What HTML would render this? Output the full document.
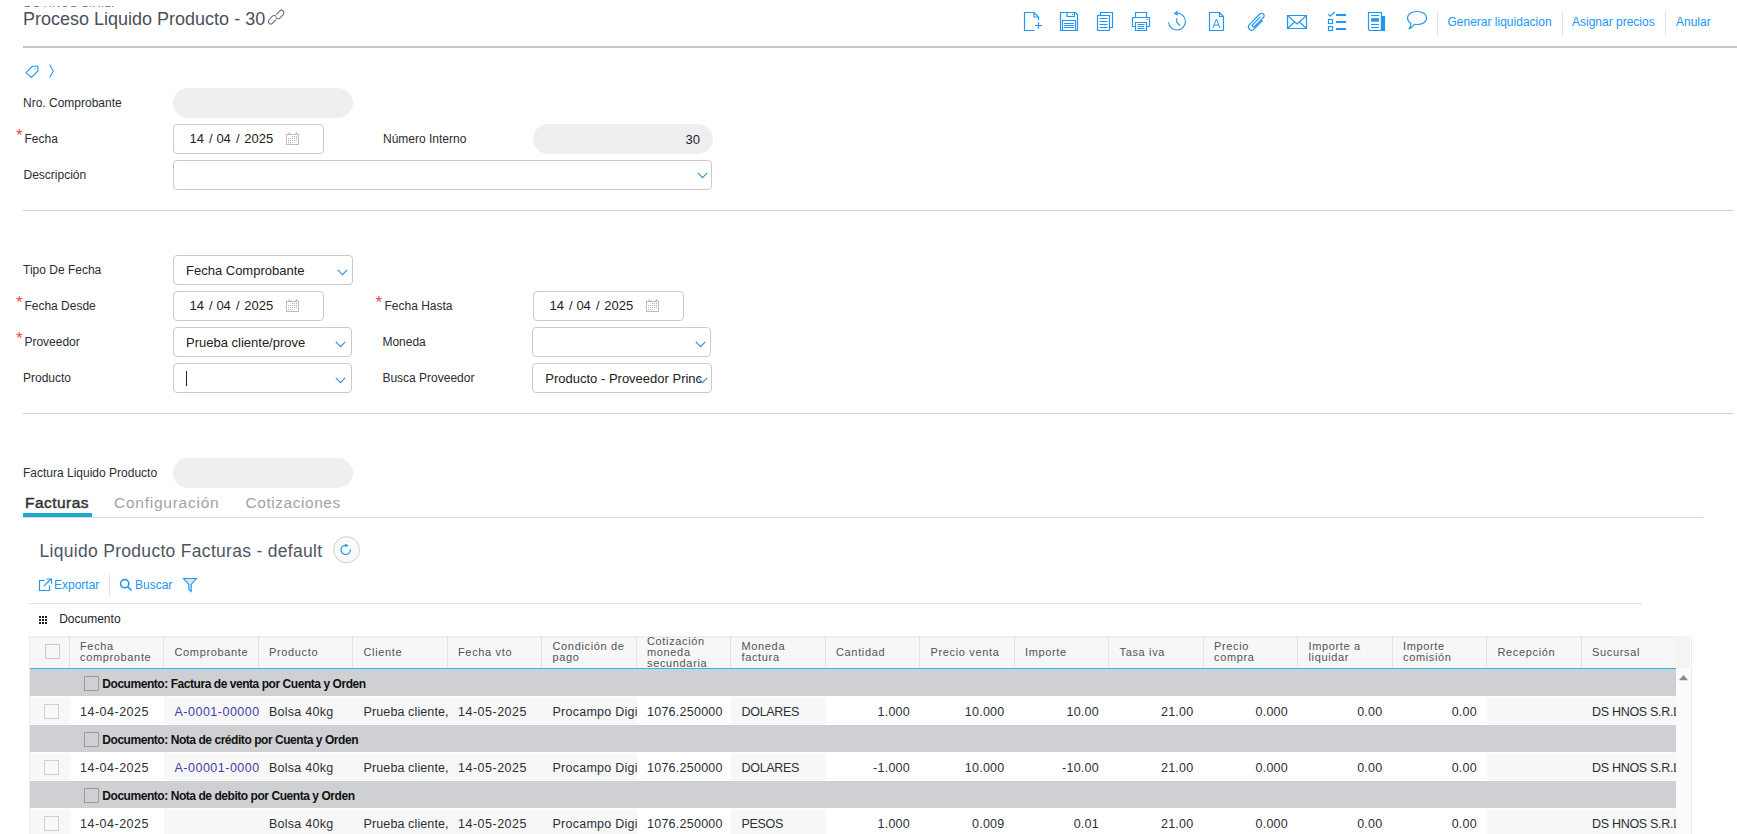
<!DOCTYPE html>
<html><head><meta charset="utf-8"><style>
html,body{margin:0;padding:0;background:#fff;width:1737px;height:834px;overflow:hidden;position:relative}
body{font-family:"Liberation Sans", sans-serif}
.t{position:absolute;white-space:nowrap}
.b{position:absolute}
svg.b{overflow:visible}
</style></head><body>
<div class="b" style="left:23px;top:6px;width:100px;height:1px;overflow:hidden"><div class="t" style="left:1px;top:-9.5px;font-size:11px;line-height:12px;color:#666;letter-spacing:0.5px">DS HNOS S.R.L.</div></div><div class="t" style="left:23px;top:7.91px;font-size:18px;line-height:22.5px;color:#4b505a;">Proceso Liquido Producto - 30</div><svg class="b" style="left:267px;top:8px" width="18" height="18" viewBox="0 0 18 18" fill="none" stroke="#6a6a6a" stroke-width="1.05">
<g transform="translate(12.4,6.9) rotate(-46)"><path d="M-2 -2.5 H2.9 A2.5 2.5 0 0 1 2.9 2.5 H-2 A2.5 2.5 0 0 1 -4.4 -0.6"/></g>
<g transform="translate(5.9,11.4) rotate(-46)"><path d="M2 2.5 H-2.9 A2.5 2.5 0 0 1 -2.9 -2.5 H2 A2.5 2.5 0 0 1 4.4 0.6"/></g>
</svg><div class="b" style="left:23px;top:46px;width:1714px;height:2px;background:#c7c8cc"></div><svg class="b" style="left:1023px;top:11px" width="20" height="21" viewBox="0 0 20 21" fill="none" stroke="#2196f3" stroke-width="1.2"><path d="M11.5 19.5 H1.5 V1.5 H11 L15.5 6 V9"/><path d="M11 1.5 V6 H15.5"/><path d="M15.5 11.3 V17.8 M12 14.5 H19"/></svg><svg class="b" style="left:1059px;top:11px" width="20" height="21" viewBox="0 0 20 21" fill="none" stroke="#2196f3" stroke-width="1.2"><path d="M1.5 1.5 H16.5 L18.5 3.5 V19.5 H1.5 Z"/><path d="M8 1.5 V5.5 H15.5 V1.5"/><path d="M3.5 19.5 V9.5 H16.5 V19.5"/><path d="M5 12.5 H15 M5 14.5 H15 M5 16.5 H15"/><rect x="13" y="3" width="1" height="1" fill="#2196f3" stroke="none"/></svg><svg class="b" style="left:1096px;top:11px" width="18" height="21" viewBox="0 0 18 21" fill="none" stroke="#2196f3" stroke-width="1.2"><path d="M4.5 4.5 V1.5 H16.5 V16.5 H13"/><path d="M1.5 4.5 H13.5 V19.5 H1.5 Z"/><path d="M3.5 7.5 H11.5 M3.5 10.5 H11.5 M3.5 13.5 H11.5 M3.5 16.5 H11.5"/></svg><svg class="b" style="left:1131px;top:11px" width="20" height="21" viewBox="0 0 20 21" fill="none" stroke="#2196f3" stroke-width="1.2"><path d="M4.5 6 V1.5 H15.5 V6"/><path d="M4.5 15.5 H1.5 V6.5 H18.5 V15.5 H15.5"/><path d="M4.5 11.5 H15.5 V19.5 H4.5 Z"/><path d="M6.5 13.5 H13.5 M6.5 15.5 H13 M6.5 17.5 H13.5"/><rect x="15.5" y="7.8" width="1.2" height="1.2" fill="#2196f3" stroke="none"/></svg><svg class="b" style="left:1167px;top:10px" width="21" height="21" viewBox="0 0 21 21" fill="none" stroke="#2196f3" stroke-width="1.2"><path d="M10.3 3 A8.5 8.5 0 1 1 1.46 12.5" stroke-width="1.1"/><path d="M6.5 3.4 L10.6 0.8 L10.6 5.8 Z" fill="#2196f3" stroke="none"/><path d="M9.8 8.3 V12.3 L13 15.5"/></svg><svg class="b" style="left:1208px;top:11px" width="17" height="21" viewBox="0 0 17 21" fill="none" stroke="#2196f3" stroke-width="1.2"><path d="M1.5 1.5 H11.5 L15.5 5.5 V19.5 H1.5 Z"/><path d="M11.5 1.5 V5.5 H15.5"/><path d="M4.8 17 L8.4 8.1 L12 17 M6 14.1 H10.8" stroke-width="1"/></svg><svg class="b" style="left:1247px;top:11px" width="19" height="21" viewBox="0 0 19 21" fill="none" stroke="#2196f3" stroke-width="1.2"><path d="M15.5 9.5 L7 18.2 a3.2 3.2 0 0 1 -4.6 -4.5 L12.8 3 a2.5 2.5 0 0 1 3.6 3.5 L7.6 15.5 a1.3 1.3 0 0 1 -1.9 -1.8 L13.5 5.6"/></svg><svg class="b" style="left:1286px;top:14px" width="22" height="16" viewBox="0 0 22 16" fill="none" stroke="#2196f3" stroke-width="1.2"><path d="M1.5 1.5 H20.5 V14.5 H1.5 Z"/><path d="M1.5 1.5 L11 10 L20.5 1.5 M1.5 14.5 L8.5 8 M20.5 14.5 L13.5 8"/></svg><svg class="b" style="left:1327px;top:11px" width="21" height="21" viewBox="0 0 21 21" fill="none" stroke="#2196f3" stroke-width="1.2"><path d="M1.2 3.2 L3.2 5.2 L7.8 1"/><path d="M9 4 H19 M9 11 H19 M9 18 H19" stroke-width="2"/><rect x="1.5" y="8.5" width="4" height="4"/><rect x="1.5" y="15.5" width="4" height="4"/></svg><svg class="b" style="left:1367px;top:11px" width="19" height="21" viewBox="0 0 19 21" fill="none" stroke="#2196f3" stroke-width="1.2"><path d="M14.5 5.5 H17.5 V19.5 H14.5 Z" fill="#2196f3"/><path d="M2.5 1.5 H14.5 V19.5 H3 a1.5 1.5 0 0 1 -1.5 -1.5 V1.5 Z"/><path d="M4 4.5 H12 M4 13.5 H12 M4 16.5 H12"/><rect x="4" y="7.2" width="8" height="3.4" fill="#2196f3" stroke="none"/></svg><svg class="b" style="left:1406px;top:10px" width="22" height="21" viewBox="0 0 22 21" fill="none" stroke="#2196f3" stroke-width="1.2"><path d="M11 1.5 C16.5 1.5 20.5 4.3 20.5 8 C20.5 11.9 16.5 14.5 11 14.5 C10 14.5 9.2 14.4 8.4 14.3 C6.5 16.5 4.2 18.5 3.4 18.8 C2.8 19 3.5 17.8 4.4 16.3 C4.8 15.4 5 14.3 4.8 13.3 C2.7 12 1.5 10.2 1.5 8 C1.5 4.3 5.5 1.5 11 1.5 Z"/></svg><div class="b" style="left:1437px;top:11px;width:1px;height:25px;background:#e3e3e3"></div><div class="b" style="left:1562px;top:11px;width:1px;height:25px;background:#e3e3e3"></div><div class="b" style="left:1665px;top:11px;width:1px;height:25px;background:#e3e3e3"></div><div class="t" style="left:1447.5px;top:14.94px;font-size:12px;line-height:15.0px;color:#2196f3;">Generar liquidacion</div><div class="t" style="left:1572px;top:14.94px;font-size:12px;line-height:15.0px;color:#2196f3;">Asignar precios</div><div class="t" style="left:1676px;top:14.94px;font-size:12px;line-height:15.0px;color:#2196f3;">Anular</div><svg class="b" style="left:24px;top:63px" width="32" height="16" viewBox="0 0 32 16" fill="none" stroke="#2196f3" stroke-width="1.1">
<path d="M2 9.6 L8.3 3.3 H13.9 V8 L7.4 14.5 Z"/><circle cx="11.2" cy="5.9" r="0.65" fill="#2196f3" stroke="none"/>
<path d="M25.6 1.5 L29.3 8 L25.6 14.5"/></svg><div class="t" style="left:23px;top:96.24px;font-size:12px;line-height:15.0px;color:#2c2c36;">Nro. Comprobante</div><div class="b" style="left:173px;top:88px;width:180px;height:30px;background:#eeeff1;border-radius:15.0px"></div><div class="t" style="left:16px;top:127.10px;font-size:17px;line-height:18px;color:#ec4850">*</div><div class="t" style="left:24.5px;top:132.24px;font-size:12px;line-height:15.0px;color:#2c2c36;">Fecha</div><div class="b" style="left:173px;top:124px;width:151px;height:30px;box-sizing:border-box;border:1px solid #c9cacd;border-radius:4px;background:#fff"></div><div class="t" style="left:189.5px;top:131.47px;font-size:13px;line-height:16.25px;color:#222;">14</div><div class="t" style="left:208.9px;top:131.47px;font-size:13px;line-height:16.25px;color:#222;">/</div><div class="t" style="left:216.4px;top:131.47px;font-size:13px;line-height:16.25px;color:#222;">04</div><div class="t" style="left:236.0px;top:131.47px;font-size:13px;line-height:16.25px;color:#222;">/</div><div class="t" style="left:244.2px;top:131.47px;font-size:13px;line-height:16.25px;color:#222;">2025</div><svg class="b" style="left:286px;top:132px" width="14" height="14" viewBox="0 0 14 14" fill="none" stroke="#bdbdbd" stroke-width="1"><rect x="0.5" y="2.5" width="12" height="10"/><path d="M2.5 2.5 L3.5 0.3 L4.5 2.5 M9.5 2.5 L10.5 0.3 L11.5 2.5"/><rect x="6" y="4" width="1" height="1" fill="#b0b0b0" stroke="none"/><rect x="8" y="4" width="1" height="1" fill="#b0b0b0" stroke="none"/><rect x="10" y="4" width="1" height="1" fill="#b0b0b0" stroke="none"/><rect x="2" y="6" width="1" height="1" fill="#b0b0b0" stroke="none"/><rect x="4" y="6" width="1" height="1" fill="#b0b0b0" stroke="none"/><rect x="6" y="6" width="1" height="1" fill="#b0b0b0" stroke="none"/><rect x="8" y="6" width="1" height="1" fill="#b0b0b0" stroke="none"/><rect x="10" y="6" width="1" height="1" fill="#b0b0b0" stroke="none"/><rect x="2" y="8" width="1" height="1" fill="#b0b0b0" stroke="none"/><rect x="4" y="8" width="1" height="1" fill="#b0b0b0" stroke="none"/><rect x="6" y="8" width="1" height="1" fill="#b0b0b0" stroke="none"/><rect x="8" y="8" width="1" height="1" fill="#b0b0b0" stroke="none"/><rect x="10" y="8" width="1" height="1" fill="#b0b0b0" stroke="none"/><rect x="2" y="10" width="1" height="1" fill="#b0b0b0" stroke="none"/><rect x="4" y="10" width="1" height="1" fill="#b0b0b0" stroke="none"/><rect x="6" y="10" width="1" height="1" fill="#b0b0b0" stroke="none"/></svg><div class="t" style="left:383px;top:132.24px;font-size:12px;line-height:15.0px;color:#2c2c36;">Número Interno</div><div class="b" style="left:533px;top:124px;width:180px;height:30px;background:#eeeff1;border-radius:15.0px"></div><div class="t" style="left:660px;width:40px;text-align:right;top:132.27px;font-size:13px;line-height:16.25px;color:#222;">30</div><div class="t" style="left:23.5px;top:168.24px;font-size:12px;line-height:15.0px;color:#2c2c36;">Descripción</div><div class="b" style="left:173px;top:160px;width:539px;height:30px;box-sizing:border-box;border:1px solid #c9cacd;border-radius:4px;background:#fff"></div><svg class="b" style="left:696.5px;top:172px" width="11" height="7" viewBox="0 0 11 7" fill="none" stroke="#3a8bd8" stroke-width="1.1"><path d="M0.8 0.8 L5.5 5.6 L10.2 0.8"/></svg><div class="b" style="left:23px;top:210px;width:1710px;height:1px;background:#d0d0d0"></div><div class="t" style="left:23px;top:263.44px;font-size:12px;line-height:15.0px;color:#2c2c36;">Tipo De Fecha</div><div class="b" style="left:173px;top:255px;width:180px;height:30px;box-sizing:border-box;border:1px solid #c9cacd;border-radius:4px;background:#fff"></div><div class="t" style="left:186px;top:263.27px;font-size:13px;line-height:16.25px;color:#222;">Fecha Comprobante</div><svg class="b" style="left:337px;top:269px" width="11" height="7" viewBox="0 0 11 7" fill="none" stroke="#3a8bd8" stroke-width="1.1"><path d="M0.8 0.8 L5.5 5.6 L10.2 0.8"/></svg><div class="t" style="left:16px;top:294.10px;font-size:17px;line-height:18px;color:#ec4850">*</div><div class="t" style="left:24.4px;top:299.24px;font-size:12px;line-height:15.0px;color:#2c2c36;">Fecha Desde</div><div class="b" style="left:173px;top:291px;width:151px;height:30px;box-sizing:border-box;border:1px solid #c9cacd;border-radius:4px;background:#fff"></div><div class="t" style="left:189.5px;top:298.27px;font-size:13px;line-height:16.25px;color:#222;">14</div><div class="t" style="left:208.9px;top:298.27px;font-size:13px;line-height:16.25px;color:#222;">/</div><div class="t" style="left:216.4px;top:298.27px;font-size:13px;line-height:16.25px;color:#222;">04</div><div class="t" style="left:236.0px;top:298.27px;font-size:13px;line-height:16.25px;color:#222;">/</div><div class="t" style="left:244.2px;top:298.27px;font-size:13px;line-height:16.25px;color:#222;">2025</div><svg class="b" style="left:286px;top:299px" width="14" height="14" viewBox="0 0 14 14" fill="none" stroke="#bdbdbd" stroke-width="1"><rect x="0.5" y="2.5" width="12" height="10"/><path d="M2.5 2.5 L3.5 0.3 L4.5 2.5 M9.5 2.5 L10.5 0.3 L11.5 2.5"/><rect x="6" y="4" width="1" height="1" fill="#b0b0b0" stroke="none"/><rect x="8" y="4" width="1" height="1" fill="#b0b0b0" stroke="none"/><rect x="10" y="4" width="1" height="1" fill="#b0b0b0" stroke="none"/><rect x="2" y="6" width="1" height="1" fill="#b0b0b0" stroke="none"/><rect x="4" y="6" width="1" height="1" fill="#b0b0b0" stroke="none"/><rect x="6" y="6" width="1" height="1" fill="#b0b0b0" stroke="none"/><rect x="8" y="6" width="1" height="1" fill="#b0b0b0" stroke="none"/><rect x="10" y="6" width="1" height="1" fill="#b0b0b0" stroke="none"/><rect x="2" y="8" width="1" height="1" fill="#b0b0b0" stroke="none"/><rect x="4" y="8" width="1" height="1" fill="#b0b0b0" stroke="none"/><rect x="6" y="8" width="1" height="1" fill="#b0b0b0" stroke="none"/><rect x="8" y="8" width="1" height="1" fill="#b0b0b0" stroke="none"/><rect x="10" y="8" width="1" height="1" fill="#b0b0b0" stroke="none"/><rect x="2" y="10" width="1" height="1" fill="#b0b0b0" stroke="none"/><rect x="4" y="10" width="1" height="1" fill="#b0b0b0" stroke="none"/><rect x="6" y="10" width="1" height="1" fill="#b0b0b0" stroke="none"/></svg><div class="t" style="left:375.5px;top:294.30px;font-size:17px;line-height:18px;color:#ec4850">*</div><div class="t" style="left:384.5px;top:299.44px;font-size:12px;line-height:15.0px;color:#2c2c36;">Fecha Hasta</div><div class="b" style="left:533px;top:291px;width:151px;height:30px;box-sizing:border-box;border:1px solid #c9cacd;border-radius:4px;background:#fff"></div><div class="t" style="left:549.5px;top:298.27px;font-size:13px;line-height:16.25px;color:#222;">14</div><div class="t" style="left:568.9px;top:298.27px;font-size:13px;line-height:16.25px;color:#222;">/</div><div class="t" style="left:576.4px;top:298.27px;font-size:13px;line-height:16.25px;color:#222;">04</div><div class="t" style="left:596.0px;top:298.27px;font-size:13px;line-height:16.25px;color:#222;">/</div><div class="t" style="left:604.2px;top:298.27px;font-size:13px;line-height:16.25px;color:#222;">2025</div><svg class="b" style="left:646px;top:299px" width="14" height="14" viewBox="0 0 14 14" fill="none" stroke="#bdbdbd" stroke-width="1"><rect x="0.5" y="2.5" width="12" height="10"/><path d="M2.5 2.5 L3.5 0.3 L4.5 2.5 M9.5 2.5 L10.5 0.3 L11.5 2.5"/><rect x="6" y="4" width="1" height="1" fill="#b0b0b0" stroke="none"/><rect x="8" y="4" width="1" height="1" fill="#b0b0b0" stroke="none"/><rect x="10" y="4" width="1" height="1" fill="#b0b0b0" stroke="none"/><rect x="2" y="6" width="1" height="1" fill="#b0b0b0" stroke="none"/><rect x="4" y="6" width="1" height="1" fill="#b0b0b0" stroke="none"/><rect x="6" y="6" width="1" height="1" fill="#b0b0b0" stroke="none"/><rect x="8" y="6" width="1" height="1" fill="#b0b0b0" stroke="none"/><rect x="10" y="6" width="1" height="1" fill="#b0b0b0" stroke="none"/><rect x="2" y="8" width="1" height="1" fill="#b0b0b0" stroke="none"/><rect x="4" y="8" width="1" height="1" fill="#b0b0b0" stroke="none"/><rect x="6" y="8" width="1" height="1" fill="#b0b0b0" stroke="none"/><rect x="8" y="8" width="1" height="1" fill="#b0b0b0" stroke="none"/><rect x="10" y="8" width="1" height="1" fill="#b0b0b0" stroke="none"/><rect x="2" y="10" width="1" height="1" fill="#b0b0b0" stroke="none"/><rect x="4" y="10" width="1" height="1" fill="#b0b0b0" stroke="none"/><rect x="6" y="10" width="1" height="1" fill="#b0b0b0" stroke="none"/></svg><div class="t" style="left:16px;top:330.30px;font-size:17px;line-height:18px;color:#ec4850">*</div><div class="t" style="left:24.4px;top:335.44px;font-size:12px;line-height:15.0px;color:#2c2c36;">Proveedor</div><div class="b" style="left:173px;top:327px;width:179px;height:30px;box-sizing:border-box;border:1px solid #c9cacd;border-radius:4px;background:#fff"></div><div class="t" style="left:186px;top:335.27px;font-size:13px;line-height:16.25px;color:#222;">Prueba cliente/prove</div><svg class="b" style="left:335px;top:340.5px" width="11" height="7" viewBox="0 0 11 7" fill="none" stroke="#3a8bd8" stroke-width="1.1"><path d="M0.8 0.8 L5.5 5.6 L10.2 0.8"/></svg><div class="t" style="left:382.4px;top:335.14px;font-size:12px;line-height:15.0px;color:#2c2c36;">Moneda</div><div class="b" style="left:532px;top:327px;width:179px;height:30px;box-sizing:border-box;border:1px solid #c9cacd;border-radius:4px;background:#fff"></div><svg class="b" style="left:694.5px;top:340.5px" width="11" height="7" viewBox="0 0 11 7" fill="none" stroke="#3a8bd8" stroke-width="1.1"><path d="M0.8 0.8 L5.5 5.6 L10.2 0.8"/></svg><div class="t" style="left:23px;top:371.24px;font-size:12px;line-height:15.0px;color:#2c2c36;">Producto</div><div class="b" style="left:173px;top:363px;width:179px;height:30px;box-sizing:border-box;border:1px solid #c9cacd;border-radius:4px;background:#fff"></div><div class="b" style="left:186px;top:371px;width:1px;height:15px;background:#222"></div><svg class="b" style="left:335px;top:376.5px" width="11" height="7" viewBox="0 0 11 7" fill="none" stroke="#3a8bd8" stroke-width="1.1"><path d="M0.8 0.8 L5.5 5.6 L10.2 0.8"/></svg><div class="t" style="left:382.4px;top:371.44px;font-size:12px;line-height:15.0px;color:#2c2c36;">Busca Proveedor</div><div class="b" style="left:532px;top:363px;width:180px;height:30px;box-sizing:border-box;border:1px solid #c9cacd;border-radius:4px;background:#fff"></div><div class="b" style="left:545px;top:363px;width:157px;height:30px;overflow:hidden"><div class="t" style="left:0.3px;top:7.97px;font-size:13px;line-height:16.25px;color:#222;">Producto - Proveedor Principal</div></div><svg class="b" style="left:697px;top:377px" width="11" height="7" viewBox="0 0 11 7" fill="none" stroke="#3a8bd8" stroke-width="1.1"><path d="M0.8 0.8 L5.5 5.6 L10.2 0.8"/></svg><div class="b" style="left:23px;top:413px;width:1710px;height:1px;background:#d0d0d0"></div><div class="t" style="left:23px;top:466.24px;font-size:12px;line-height:15.0px;color:#2c2c36;">Factura Liquido Producto</div><div class="b" style="left:173px;top:458px;width:180px;height:30px;background:#eeeff1;border-radius:15.0px"></div><div class="t" style="left:25px;top:493.14px;font-size:15.5px;line-height:19.38px;color:#333;letter-spacing:0.45px;-webkit-text-stroke:0.45px #333;">Facturas</div><div class="t" style="left:114px;top:493.14px;font-size:15.5px;line-height:19.38px;color:#a3a3a3;letter-spacing:0.75px;">Configuración</div><div class="t" style="left:245.5px;top:493.14px;font-size:15.5px;line-height:19.38px;color:#a3a3a3;letter-spacing:0.55px;">Cotizaciones</div><div class="b" style="left:23px;top:517px;width:1680px;height:1px;background:#d9d9d9"></div><div class="b" style="left:23px;top:513px;width:69px;height:4px;background:#1aa8d0"></div><div class="t" style="left:39.5px;top:541.30px;font-size:17.5px;line-height:21.88px;color:#4f5562;letter-spacing:0.3px;">Liquido Producto Facturas - default</div><svg class="b" style="left:332px;top:536px" width="29" height="28" viewBox="0 0 29 28">
<circle cx="14.6" cy="13.7" r="13" fill="#fafafa" stroke="#cfcfd2" stroke-width="1"/>
<path d="M13.9 9.1 A4.7 4.7 0 1 0 18.4 13.3" fill="none" stroke="#2196f3" stroke-width="1.2"/>
<path d="M16.6 9.6 L13.2 7.7 L13.2 11.6 Z" fill="#2196f3"/></svg><svg class="b" style="left:38px;top:578px" width="15" height="14" viewBox="0 0 15 14" fill="none" stroke="#2196f3" stroke-width="1.2">
<path d="M6.5 2.5 H1.5 V12.5 H11.5 V7.5"/><path d="M5.8 8.2 L13 1 M8.5 1 H13.5 V5.8"/></svg><div class="t" style="left:54px;top:578.24px;font-size:12px;line-height:15.0px;color:#2196f3;">Exportar</div><div class="b" style="left:109px;top:574px;width:1px;height:23px;background:#e3e3e3"></div><svg class="b" style="left:119px;top:578px" width="14" height="14" viewBox="0 0 14 14" fill="none" stroke="#2196f3" stroke-width="1.6">
<circle cx="5.7" cy="5.7" r="4.1"/><path d="M8.7 8.7 L12.6 12.6"/></svg><div class="t" style="left:135px;top:578.24px;font-size:12px;line-height:15.0px;color:#2196f3;">Buscar</div><svg class="b" style="left:182px;top:577px" width="16" height="16" viewBox="0 0 16 16" fill="none" stroke="#2196f3" stroke-width="1.1">
<path d="M1.5 1.5 H14.5 L9.2 7.5 V14.5 L6.8 12.3 V7.5 Z" fill="#d3e7fa"/></svg><div class="b" style="left:29px;top:603px;width:1613px;height:1px;background:#e3e3e3"></div><svg class="b" style="left:39px;top:616px" width="9" height="9" viewBox="0 0 9 9" fill="#222"><rect x="0" y="0" width="2" height="2"/><rect x="3" y="0" width="2" height="2"/><rect x="6" y="0" width="2" height="2"/><rect x="0" y="3" width="2" height="2"/><rect x="3" y="3" width="2" height="2"/><rect x="6" y="3" width="2" height="2"/><rect x="0" y="6" width="2" height="2"/><rect x="3" y="6" width="2" height="2"/><rect x="6" y="6" width="2" height="2"/></svg><div class="t" style="left:59.2px;top:612.44px;font-size:12px;line-height:15.0px;color:#222;">Documento</div><div class="b" style="left:29px;top:635px;width:1px;height:199px;background:#ececec"></div><div class="b" style="left:30px;top:636px;width:1645.5px;height:32px;background:#f7f7f7"></div><div class="b" style="left:30px;top:636px;width:1645.5px;height:2px;background:#f0f0f0"></div><div class="b" style="left:1676px;top:636px;width:14px;height:32px;background:#f4f4f4"></div><div class="b" style="left:1676px;top:669px;width:15px;height:165px;background:#fbfbfb"></div><div class="b" style="left:1691px;top:636px;width:1px;height:198px;background:#ececec"></div><svg class="b" style="left:1678px;top:673px" width="10" height="7" viewBox="0 0 10 7"><path d="M1 7.2 L5.5 2 L10 7.2 Z" fill="#8a8a8a"/></svg><div class="b" style="left:45px;top:644px;width:15px;height:15px;box-sizing:border-box;border:1px solid #c8c9cc;background:#f7f7f7"></div><div class="b" style="left:69px;top:636px;width:1px;height:32px;background:#e2e2e2"></div><div class="t" style="left:80.0px;top:640.31px;font-size:11px;line-height:13.75px;color:#525354;letter-spacing:0.65px;">Fecha</div><div class="t" style="left:80.0px;top:651.11px;font-size:11px;line-height:13.75px;color:#525354;letter-spacing:0.65px;">comprobante</div><div class="b" style="left:163px;top:636px;width:1px;height:32px;background:#e2e2e2"></div><div class="t" style="left:174.5px;top:646.41px;font-size:11px;line-height:13.75px;color:#525354;letter-spacing:0.65px;">Comprobante</div><div class="b" style="left:258px;top:636px;width:1px;height:32px;background:#e2e2e2"></div><div class="t" style="left:269.0px;top:646.41px;font-size:11px;line-height:13.75px;color:#525354;letter-spacing:0.65px;">Producto</div><div class="b" style="left:352px;top:636px;width:1px;height:32px;background:#e2e2e2"></div><div class="t" style="left:363.5px;top:646.41px;font-size:11px;line-height:13.75px;color:#525354;letter-spacing:0.65px;">Cliente</div><div class="b" style="left:447px;top:636px;width:1px;height:32px;background:#e2e2e2"></div><div class="t" style="left:458.0px;top:646.41px;font-size:11px;line-height:13.75px;color:#525354;letter-spacing:0.65px;">Fecha vto</div><div class="b" style="left:541px;top:636px;width:1px;height:32px;background:#e2e2e2"></div><div class="t" style="left:552.5px;top:640.31px;font-size:11px;line-height:13.75px;color:#525354;letter-spacing:0.65px;">Condición de</div><div class="t" style="left:552.5px;top:651.11px;font-size:11px;line-height:13.75px;color:#525354;letter-spacing:0.65px;">pago</div><div class="b" style="left:636px;top:636px;width:1px;height:32px;background:#e2e2e2"></div><div class="t" style="left:647.0px;top:635.41px;font-size:11px;line-height:13.75px;color:#525354;letter-spacing:0.65px;">Cotización</div><div class="t" style="left:647.0px;top:646.21px;font-size:11px;line-height:13.75px;color:#525354;letter-spacing:0.65px;">moneda</div><div class="t" style="left:647.0px;top:656.81px;font-size:11px;line-height:13.75px;color:#525354;letter-spacing:0.65px;">secundaria</div><div class="b" style="left:730px;top:636px;width:1px;height:32px;background:#e2e2e2"></div><div class="t" style="left:741.5px;top:640.31px;font-size:11px;line-height:13.75px;color:#525354;letter-spacing:0.65px;">Moneda</div><div class="t" style="left:741.5px;top:651.11px;font-size:11px;line-height:13.75px;color:#525354;letter-spacing:0.65px;">factura</div><div class="b" style="left:825px;top:636px;width:1px;height:32px;background:#e2e2e2"></div><div class="t" style="left:836.0px;top:646.41px;font-size:11px;line-height:13.75px;color:#525354;letter-spacing:0.65px;">Cantidad</div><div class="b" style="left:919px;top:636px;width:1px;height:32px;background:#e2e2e2"></div><div class="t" style="left:930.5px;top:646.41px;font-size:11px;line-height:13.75px;color:#525354;letter-spacing:0.65px;">Precio venta</div><div class="b" style="left:1014px;top:636px;width:1px;height:32px;background:#e2e2e2"></div><div class="t" style="left:1025.0px;top:646.41px;font-size:11px;line-height:13.75px;color:#525354;letter-spacing:0.65px;">Importe</div><div class="b" style="left:1108px;top:636px;width:1px;height:32px;background:#e2e2e2"></div><div class="t" style="left:1119.5px;top:646.41px;font-size:11px;line-height:13.75px;color:#525354;letter-spacing:0.65px;">Tasa iva</div><div class="b" style="left:1203px;top:636px;width:1px;height:32px;background:#e2e2e2"></div><div class="t" style="left:1214.0px;top:640.31px;font-size:11px;line-height:13.75px;color:#525354;letter-spacing:0.65px;">Precio</div><div class="t" style="left:1214.0px;top:651.11px;font-size:11px;line-height:13.75px;color:#525354;letter-spacing:0.65px;">compra</div><div class="b" style="left:1297px;top:636px;width:1px;height:32px;background:#e2e2e2"></div><div class="t" style="left:1308.5px;top:640.31px;font-size:11px;line-height:13.75px;color:#525354;letter-spacing:0.65px;">Importe a</div><div class="t" style="left:1308.5px;top:651.11px;font-size:11px;line-height:13.75px;color:#525354;letter-spacing:0.65px;">liquidar</div><div class="b" style="left:1392px;top:636px;width:1px;height:32px;background:#e2e2e2"></div><div class="t" style="left:1403.0px;top:640.31px;font-size:11px;line-height:13.75px;color:#525354;letter-spacing:0.65px;">Importe</div><div class="t" style="left:1403.0px;top:651.11px;font-size:11px;line-height:13.75px;color:#525354;letter-spacing:0.65px;">comisión</div><div class="b" style="left:1486px;top:636px;width:1px;height:32px;background:#e2e2e2"></div><div class="t" style="left:1497.5px;top:646.41px;font-size:11px;line-height:13.75px;color:#525354;letter-spacing:0.65px;">Recepción</div><div class="b" style="left:1581px;top:636px;width:1px;height:32px;background:#e2e2e2"></div><div class="t" style="left:1592.0px;top:646.41px;font-size:11px;line-height:13.75px;color:#525354;letter-spacing:0.65px;">Sucursal</div><div class="b" style="left:30px;top:668px;width:1645.5px;height:1px;background:#1cbdf0"></div><div class="b" style="left:30px;top:669px;width:1645.5px;height:27px;background:#cfd0d4"></div><div class="b" style="left:84px;top:676px;width:15px;height:15px;box-sizing:border-box;border:1px solid #9a9ba0;background:#cfd0d4"></div><div class="t" style="left:102.3px;top:676.84px;font-size:12px;line-height:15.0px;color:#111;font-weight:700;letter-spacing:-0.45px;">Documento: Factura de venta por Cuenta y Orden</div><div class="b" style="left:30px;top:697px;width:40px;height:27px;background:#f7f7f7"></div><div class="b" style="left:44px;top:704px;width:15px;height:15px;box-sizing:border-box;border:1px solid #d0d0d3;background:#f9f9f9"></div><div class="b" style="left:70px;top:697px;width:94px;height:27px;background:#fff;overflow:hidden"><div class="t" style="left:10.0px;top:7.96px;font-size:12.5px;line-height:15.62px;color:#2b2f38;letter-spacing:0.5px;">14-04-2025</div></div><div class="b" style="left:164px;top:697px;width:95px;height:27px;background:#f7f7f7;overflow:hidden"><div class="t" style="left:10.5px;top:7.96px;font-size:12.5px;line-height:15.62px;color:#3f3fa8;letter-spacing:0.5px;">A-0001-00000</div></div><div class="b" style="left:259px;top:697px;width:94px;height:27px;background:#f7f7f7;overflow:hidden"><div class="t" style="left:10.0px;top:7.96px;font-size:12.5px;line-height:15.62px;color:#2b2f38;letter-spacing:0.25px;">Bolsa 40kg</div></div><div class="b" style="left:353px;top:697px;width:95px;height:27px;background:#f7f7f7;overflow:hidden"><div class="t" style="left:10.5px;top:7.96px;font-size:12.5px;line-height:15.62px;color:#2b2f38;letter-spacing:0.12px;">Prueba cliente, proveedor</div></div><div class="b" style="left:448px;top:697px;width:94px;height:27px;background:#f7f7f7;overflow:hidden"><div class="t" style="left:10.0px;top:7.96px;font-size:12.5px;line-height:15.62px;color:#2b2f38;letter-spacing:0.5px;">14-05-2025</div></div><div class="b" style="left:542px;top:697px;width:95px;height:27px;background:#f7f7f7;overflow:hidden"><div class="t" style="left:10.5px;top:7.96px;font-size:12.5px;line-height:15.62px;color:#2b2f38;letter-spacing:0.25px;">Procampo Digital</div></div><div class="b" style="left:637px;top:697px;width:94px;height:27px;background:#fff;overflow:hidden"><div class="t" style="left:10.0px;top:7.96px;font-size:12.5px;line-height:15.62px;color:#2b2f38;letter-spacing:0.25px;">1076.250000</div></div><div class="b" style="left:731px;top:697px;width:95px;height:27px;background:#f7f7f7;overflow:hidden"><div class="t" style="left:10.5px;top:7.96px;font-size:12.5px;line-height:15.62px;color:#2b2f38;letter-spacing:-0.3px;">DOLARES</div></div><div class="b" style="left:826px;top:697px;width:94px;height:27px;background:#fff;overflow:hidden"><div class="t" style="left:-6.0px;width:90px;text-align:right;top:7.96px;font-size:12.5px;line-height:15.62px;color:#2b2f38;letter-spacing:0.25px;">1.000</div></div><div class="b" style="left:920px;top:697px;width:95px;height:27px;background:#fff;overflow:hidden"><div class="t" style="left:-5.5px;width:90px;text-align:right;top:7.96px;font-size:12.5px;line-height:15.62px;color:#2b2f38;letter-spacing:0.25px;">10.000</div></div><div class="b" style="left:1015px;top:697px;width:94px;height:27px;background:#fff;overflow:hidden"><div class="t" style="left:-6.0px;width:90px;text-align:right;top:7.96px;font-size:12.5px;line-height:15.62px;color:#2b2f38;letter-spacing:0.25px;">10.00</div></div><div class="b" style="left:1109px;top:697px;width:95px;height:27px;background:#fff;overflow:hidden"><div class="t" style="left:-5.5px;width:90px;text-align:right;top:7.96px;font-size:12.5px;line-height:15.62px;color:#2b2f38;letter-spacing:0.25px;">21.00</div></div><div class="b" style="left:1204px;top:697px;width:94px;height:27px;background:#fff;overflow:hidden"><div class="t" style="left:-6.0px;width:90px;text-align:right;top:7.96px;font-size:12.5px;line-height:15.62px;color:#2b2f38;letter-spacing:0.25px;">0.000</div></div><div class="b" style="left:1298px;top:697px;width:95px;height:27px;background:#fff;overflow:hidden"><div class="t" style="left:-5.5px;width:90px;text-align:right;top:7.96px;font-size:12.5px;line-height:15.62px;color:#2b2f38;letter-spacing:0.25px;">0.00</div></div><div class="b" style="left:1393px;top:697px;width:94px;height:27px;background:#fff;overflow:hidden"><div class="t" style="left:-6.0px;width:90px;text-align:right;top:7.96px;font-size:12.5px;line-height:15.62px;color:#2b2f38;letter-spacing:0.25px;">0.00</div></div><div class="b" style="left:1487px;top:697px;width:95px;height:27px;background:#f7f7f7;overflow:hidden"></div><div class="b" style="left:1582px;top:697px;width:94px;height:27px;background:#f7f7f7;overflow:hidden"><div class="t" style="left:10.0px;top:7.96px;font-size:12.5px;line-height:15.62px;color:#2b2f38;letter-spacing:-0.3px;">DS HNOS S.R.L.</div></div><div class="b" style="left:30px;top:725px;width:1645.5px;height:27px;background:#cfd0d4"></div><div class="b" style="left:84px;top:732px;width:15px;height:15px;box-sizing:border-box;border:1px solid #9a9ba0;background:#cfd0d4"></div><div class="t" style="left:102.3px;top:732.84px;font-size:12px;line-height:15.0px;color:#111;font-weight:700;letter-spacing:-0.45px;">Documento: Nota de crédito por Cuenta y Orden</div><div class="b" style="left:30px;top:753px;width:40px;height:27px;background:#f7f7f7"></div><div class="b" style="left:44px;top:760px;width:15px;height:15px;box-sizing:border-box;border:1px solid #d0d0d3;background:#f9f9f9"></div><div class="b" style="left:70px;top:753px;width:94px;height:27px;background:#fff;overflow:hidden"><div class="t" style="left:10.0px;top:7.96px;font-size:12.5px;line-height:15.62px;color:#2b2f38;letter-spacing:0.5px;">14-04-2025</div></div><div class="b" style="left:164px;top:753px;width:95px;height:27px;background:#f7f7f7;overflow:hidden"><div class="t" style="left:10.5px;top:7.96px;font-size:12.5px;line-height:15.62px;color:#3f3fa8;letter-spacing:0.5px;">A-00001-00000</div></div><div class="b" style="left:259px;top:753px;width:94px;height:27px;background:#f7f7f7;overflow:hidden"><div class="t" style="left:10.0px;top:7.96px;font-size:12.5px;line-height:15.62px;color:#2b2f38;letter-spacing:0.25px;">Bolsa 40kg</div></div><div class="b" style="left:353px;top:753px;width:95px;height:27px;background:#f7f7f7;overflow:hidden"><div class="t" style="left:10.5px;top:7.96px;font-size:12.5px;line-height:15.62px;color:#2b2f38;letter-spacing:0.12px;">Prueba cliente, proveedor</div></div><div class="b" style="left:448px;top:753px;width:94px;height:27px;background:#f7f7f7;overflow:hidden"><div class="t" style="left:10.0px;top:7.96px;font-size:12.5px;line-height:15.62px;color:#2b2f38;letter-spacing:0.5px;">14-05-2025</div></div><div class="b" style="left:542px;top:753px;width:95px;height:27px;background:#f7f7f7;overflow:hidden"><div class="t" style="left:10.5px;top:7.96px;font-size:12.5px;line-height:15.62px;color:#2b2f38;letter-spacing:0.25px;">Procampo Digital</div></div><div class="b" style="left:637px;top:753px;width:94px;height:27px;background:#fff;overflow:hidden"><div class="t" style="left:10.0px;top:7.96px;font-size:12.5px;line-height:15.62px;color:#2b2f38;letter-spacing:0.25px;">1076.250000</div></div><div class="b" style="left:731px;top:753px;width:95px;height:27px;background:#f7f7f7;overflow:hidden"><div class="t" style="left:10.5px;top:7.96px;font-size:12.5px;line-height:15.62px;color:#2b2f38;letter-spacing:-0.3px;">DOLARES</div></div><div class="b" style="left:826px;top:753px;width:94px;height:27px;background:#fff;overflow:hidden"><div class="t" style="left:-6.0px;width:90px;text-align:right;top:7.96px;font-size:12.5px;line-height:15.62px;color:#2b2f38;letter-spacing:0.25px;">-1.000</div></div><div class="b" style="left:920px;top:753px;width:95px;height:27px;background:#fff;overflow:hidden"><div class="t" style="left:-5.5px;width:90px;text-align:right;top:7.96px;font-size:12.5px;line-height:15.62px;color:#2b2f38;letter-spacing:0.25px;">10.000</div></div><div class="b" style="left:1015px;top:753px;width:94px;height:27px;background:#fff;overflow:hidden"><div class="t" style="left:-6.0px;width:90px;text-align:right;top:7.96px;font-size:12.5px;line-height:15.62px;color:#2b2f38;letter-spacing:0.25px;">-10.00</div></div><div class="b" style="left:1109px;top:753px;width:95px;height:27px;background:#fff;overflow:hidden"><div class="t" style="left:-5.5px;width:90px;text-align:right;top:7.96px;font-size:12.5px;line-height:15.62px;color:#2b2f38;letter-spacing:0.25px;">21.00</div></div><div class="b" style="left:1204px;top:753px;width:94px;height:27px;background:#fff;overflow:hidden"><div class="t" style="left:-6.0px;width:90px;text-align:right;top:7.96px;font-size:12.5px;line-height:15.62px;color:#2b2f38;letter-spacing:0.25px;">0.000</div></div><div class="b" style="left:1298px;top:753px;width:95px;height:27px;background:#fff;overflow:hidden"><div class="t" style="left:-5.5px;width:90px;text-align:right;top:7.96px;font-size:12.5px;line-height:15.62px;color:#2b2f38;letter-spacing:0.25px;">0.00</div></div><div class="b" style="left:1393px;top:753px;width:94px;height:27px;background:#fff;overflow:hidden"><div class="t" style="left:-6.0px;width:90px;text-align:right;top:7.96px;font-size:12.5px;line-height:15.62px;color:#2b2f38;letter-spacing:0.25px;">0.00</div></div><div class="b" style="left:1487px;top:753px;width:95px;height:27px;background:#f7f7f7;overflow:hidden"></div><div class="b" style="left:1582px;top:753px;width:94px;height:27px;background:#f7f7f7;overflow:hidden"><div class="t" style="left:10.0px;top:7.96px;font-size:12.5px;line-height:15.62px;color:#2b2f38;letter-spacing:-0.3px;">DS HNOS S.R.L.</div></div><div class="b" style="left:30px;top:781px;width:1645.5px;height:27px;background:#cfd0d4"></div><div class="b" style="left:84px;top:788px;width:15px;height:15px;box-sizing:border-box;border:1px solid #9a9ba0;background:#cfd0d4"></div><div class="t" style="left:102.3px;top:788.84px;font-size:12px;line-height:15.0px;color:#111;font-weight:700;letter-spacing:-0.45px;">Documento: Nota de debito por Cuenta y Orden</div><div class="b" style="left:30px;top:809px;width:40px;height:27px;background:#f7f7f7"></div><div class="b" style="left:44px;top:816px;width:15px;height:15px;box-sizing:border-box;border:1px solid #d0d0d3;background:#f9f9f9"></div><div class="b" style="left:70px;top:809px;width:94px;height:27px;background:#fff;overflow:hidden"><div class="t" style="left:10.0px;top:7.96px;font-size:12.5px;line-height:15.62px;color:#2b2f38;letter-spacing:0.5px;">14-04-2025</div></div><div class="b" style="left:164px;top:809px;width:95px;height:27px;background:#f7f7f7;overflow:hidden"></div><div class="b" style="left:259px;top:809px;width:94px;height:27px;background:#f7f7f7;overflow:hidden"><div class="t" style="left:10.0px;top:7.96px;font-size:12.5px;line-height:15.62px;color:#2b2f38;letter-spacing:0.25px;">Bolsa 40kg</div></div><div class="b" style="left:353px;top:809px;width:95px;height:27px;background:#f7f7f7;overflow:hidden"><div class="t" style="left:10.5px;top:7.96px;font-size:12.5px;line-height:15.62px;color:#2b2f38;letter-spacing:0.12px;">Prueba cliente, proveedor</div></div><div class="b" style="left:448px;top:809px;width:94px;height:27px;background:#f7f7f7;overflow:hidden"><div class="t" style="left:10.0px;top:7.96px;font-size:12.5px;line-height:15.62px;color:#2b2f38;letter-spacing:0.5px;">14-05-2025</div></div><div class="b" style="left:542px;top:809px;width:95px;height:27px;background:#f7f7f7;overflow:hidden"><div class="t" style="left:10.5px;top:7.96px;font-size:12.5px;line-height:15.62px;color:#2b2f38;letter-spacing:0.25px;">Procampo Digital</div></div><div class="b" style="left:637px;top:809px;width:94px;height:27px;background:#fff;overflow:hidden"><div class="t" style="left:10.0px;top:7.96px;font-size:12.5px;line-height:15.62px;color:#2b2f38;letter-spacing:0.25px;">1076.250000</div></div><div class="b" style="left:731px;top:809px;width:95px;height:27px;background:#f7f7f7;overflow:hidden"><div class="t" style="left:10.5px;top:7.96px;font-size:12.5px;line-height:15.62px;color:#2b2f38;letter-spacing:-0.3px;">PESOS</div></div><div class="b" style="left:826px;top:809px;width:94px;height:27px;background:#fff;overflow:hidden"><div class="t" style="left:-6.0px;width:90px;text-align:right;top:7.96px;font-size:12.5px;line-height:15.62px;color:#2b2f38;letter-spacing:0.25px;">1.000</div></div><div class="b" style="left:920px;top:809px;width:95px;height:27px;background:#fff;overflow:hidden"><div class="t" style="left:-5.5px;width:90px;text-align:right;top:7.96px;font-size:12.5px;line-height:15.62px;color:#2b2f38;letter-spacing:0.25px;">0.009</div></div><div class="b" style="left:1015px;top:809px;width:94px;height:27px;background:#fff;overflow:hidden"><div class="t" style="left:-6.0px;width:90px;text-align:right;top:7.96px;font-size:12.5px;line-height:15.62px;color:#2b2f38;letter-spacing:0.25px;">0.01</div></div><div class="b" style="left:1109px;top:809px;width:95px;height:27px;background:#fff;overflow:hidden"><div class="t" style="left:-5.5px;width:90px;text-align:right;top:7.96px;font-size:12.5px;line-height:15.62px;color:#2b2f38;letter-spacing:0.25px;">21.00</div></div><div class="b" style="left:1204px;top:809px;width:94px;height:27px;background:#fff;overflow:hidden"><div class="t" style="left:-6.0px;width:90px;text-align:right;top:7.96px;font-size:12.5px;line-height:15.62px;color:#2b2f38;letter-spacing:0.25px;">0.000</div></div><div class="b" style="left:1298px;top:809px;width:95px;height:27px;background:#fff;overflow:hidden"><div class="t" style="left:-5.5px;width:90px;text-align:right;top:7.96px;font-size:12.5px;line-height:15.62px;color:#2b2f38;letter-spacing:0.25px;">0.00</div></div><div class="b" style="left:1393px;top:809px;width:94px;height:27px;background:#fff;overflow:hidden"><div class="t" style="left:-6.0px;width:90px;text-align:right;top:7.96px;font-size:12.5px;line-height:15.62px;color:#2b2f38;letter-spacing:0.25px;">0.00</div></div><div class="b" style="left:1487px;top:809px;width:95px;height:27px;background:#f7f7f7;overflow:hidden"></div><div class="b" style="left:1582px;top:809px;width:94px;height:27px;background:#f7f7f7;overflow:hidden"><div class="t" style="left:10.0px;top:7.96px;font-size:12.5px;line-height:15.62px;color:#2b2f38;letter-spacing:-0.3px;">DS HNOS S.R.L.</div></div>
</body></html>
